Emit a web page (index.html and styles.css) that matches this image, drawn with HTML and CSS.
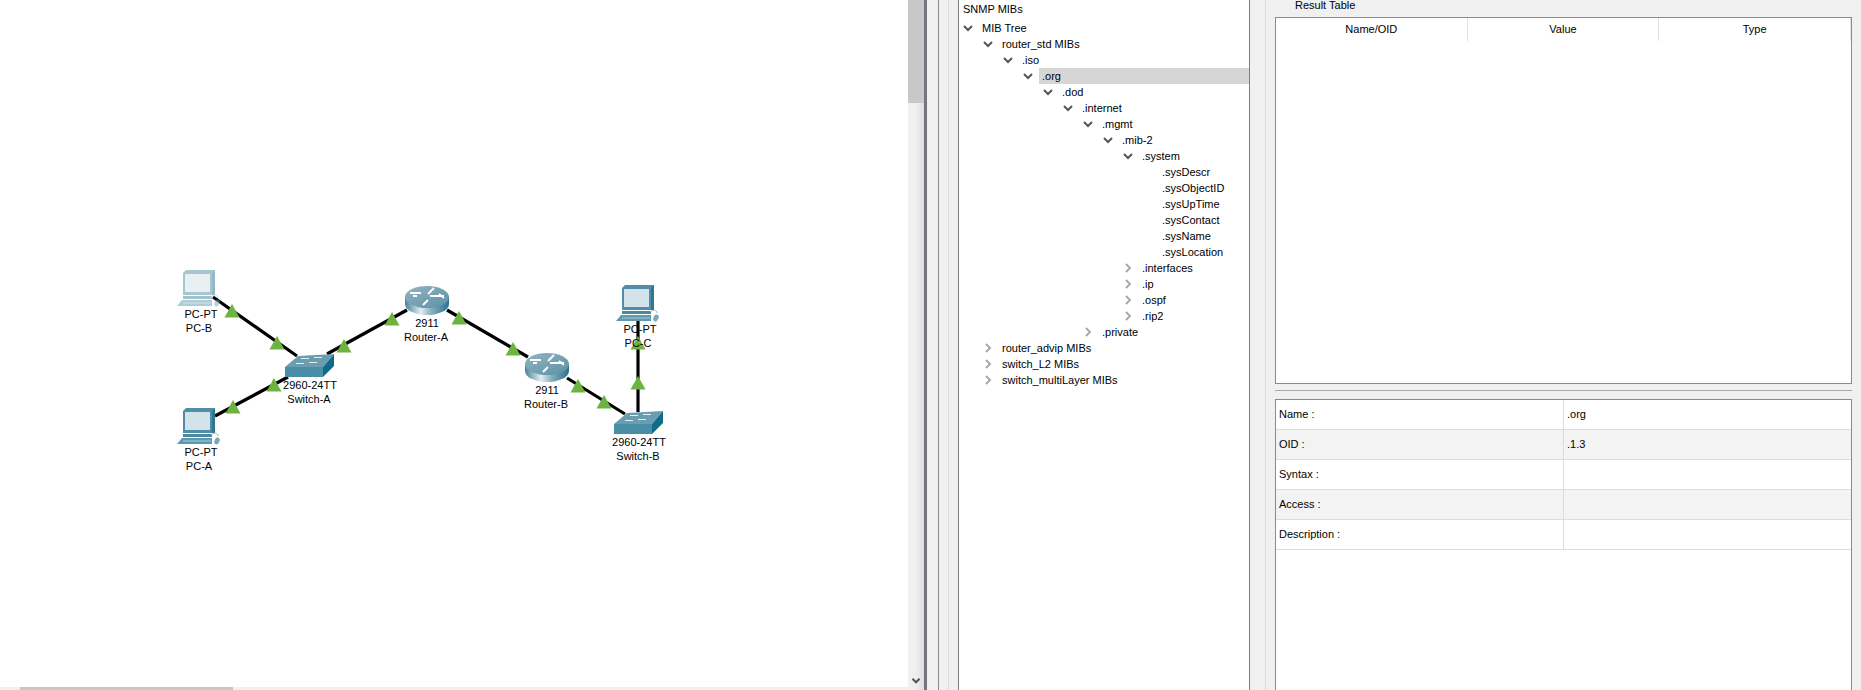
FILE: index.html
```html
<!DOCTYPE html>
<html lang="en">
<head>
<meta charset="utf-8">
<title>SNMP MIB Browser</title>
<link rel="stylesheet" href="styles.css">
</head>
<body>
<main class="app">
  <section class="workspace">
    <div class="canvas-row">
      <div class="canvas">
        <svg class="diagram" width="908" height="687" viewBox="0 0 908 687" xmlns="http://www.w3.org/2000/svg">
          <defs>
            <linearGradient id="routerBody" x1="0" x2="1" y1="0" y2="0">
              <stop offset="0" stop-color="#4a8298"/>
              <stop offset=".36" stop-color="#e2edf0"/>
              <stop offset=".6" stop-color="#86afbe"/>
              <stop offset="1" stop-color="#2a728c"/>
            </linearGradient>
            <linearGradient id="routerTop" x1="0" x2="1" y1="0" y2="1">
              <stop offset="0" stop-color="#93b5c3"/>
              <stop offset="1" stop-color="#5b90a5"/>
            </linearGradient>
            <g id="pc">
              <path class="pc-back" d="M0 3 3 0H32V25H0Z"/>
              <path class="pc-side" d="M29 3 32 0V25H29Z"/>
              <rect class="pc-screen" x="2" y="4" width="25" height="18"/>
              <rect class="pc-stand" x="0" y="26" width="29" height="3"/>
              <path class="pc-base" d="M-6 36-1 30H29V36Z"/>
              <path class="pc-line" d="M0 33H28"/>
              <path class="pc-cable" d="M28 27C31 24 35 25 35 28"/>
              <ellipse class="pc-mouse" cx="34" cy="33" rx="2.5" ry="3.5" transform="rotate(25 34 33)"/>
            </g>
            <g id="router">
              <path fill="url(#routerBody)" d="M-22 0V7A22 11 0 0 0 22 7V0Z"/>
              <ellipse fill="url(#routerTop)" rx="22" ry="11"/>
              <path class="router-arrows" d="M-17-4H-6M-14-1H-10M1-3 7-9M3-1H17M12-3 17 1M-4 8 1 3"/>
            </g>
            <g id="switch">
              <path class="sw-top" d="M0 13 13 2 49 0 38 13Z"/>
              <path class="sw-front" d="M0 13H38V23H0Z"/>
              <path class="sw-side" d="M38 13 49 0V12L38 23Z"/>
              <path class="sw-marks" d="M16 4.500H24M29 3.500H37M11 9.500H19M24 8.500H32"/>
            </g>
            <path id="tri" class="tri" d="M0 0 7.500 13.500H-7.500Z"/>
          </defs>

          <g class="links">
            <path d="M213 297 297 356"/>
            <path d="M215 416 288 377"/>
            <path d="M327 354 407 310"/>
            <path d="M447 310 528 357"/>
            <path d="M567 378 625 414"/>
            <path d="M638 318V412"/>
          </g>

          <use href="#pc" x="183" y="270" class="faded"/>
          <use href="#pc" x="183" y="408"/>
          <use href="#pc" x="622" y="285"/>
          <use href="#router" x="427" y="297"/>
          <use href="#router" x="547" y="364"/>
          <use href="#switch" x="285" y="354"/>
          <use href="#switch" x="614" y="411"/>

          <use href="#tri" x="232" y="304"/>
          <use href="#tri" x="277" y="336"/>
          <use href="#tri" x="344" y="339"/>
          <use href="#tri" x="392" y="312"/>
          <use href="#tri" x="274" y="378"/>
          <use href="#tri" x="233" y="400"/>
          <use href="#tri" x="459" y="311"/>
          <use href="#tri" x="513" y="342"/>
          <use href="#tri" x="578" y="379"/>
          <use href="#tri" x="604" y="395"/>
          <use href="#tri" x="638" y="376"/>
          <use href="#tri" x="638" y="336"/>

          <g class="labels">
            <text x="201" y="318">PC-PT</text>
            <text x="199" y="332">PC-B</text>
            <text x="201" y="456">PC-PT</text>
            <text x="199" y="470">PC-A</text>
            <text x="310" y="389">2960-24TT</text>
            <text x="309" y="403">Switch-A</text>
            <text x="427" y="327">2911</text>
            <text x="426" y="341">Router-A</text>
            <text x="547" y="394">2911</text>
            <text x="546" y="408">Router-B</text>
            <text x="640" y="333">PC-PT</text>
            <text x="638" y="347">PC-C</text>
            <text x="639" y="446">2960-24TT</text>
            <text x="638" y="460">Switch-B</text>
          </g>
        </svg>
      </div>
      <div class="vscroll">
        <div class="vthumb"></div>
        <svg class="vscroll-arrow" width="8" height="6" viewBox="0 0 8 6"><path d="M.5 .8 4 4.300 7.500 .8"/></svg>
      </div>
    </div>
    <div class="hscroll"><div class="hthumb"></div></div>
  </section>

  <section class="dock">
    <div class="frame-mid">
      <div class="frame-inner">
        <div class="tree">
          <div class="tree-title">SNMP MIBs</div>
          <div class="row d0"><svg class="chev" viewBox="0 0 12 16"><path class="open" d="M2 6 6 10 10 6"/></svg><span class="label">MIB Tree</span></div>
          <div class="row d1"><svg class="chev" viewBox="0 0 12 16"><path class="open" d="M2 6 6 10 10 6"/></svg><span class="label">router_std MIBs</span></div>
          <div class="row d2"><svg class="chev" viewBox="0 0 12 16"><path class="open" d="M2 6 6 10 10 6"/></svg><span class="label">.iso</span></div>
          <div class="row d3"><svg class="chev" viewBox="0 0 12 16"><path class="open" d="M2 6 6 10 10 6"/></svg><span class="label selected">.org</span></div>
          <div class="row d4"><svg class="chev" viewBox="0 0 12 16"><path class="open" d="M2 6 6 10 10 6"/></svg><span class="label">.dod</span></div>
          <div class="row d5"><svg class="chev" viewBox="0 0 12 16"><path class="open" d="M2 6 6 10 10 6"/></svg><span class="label">.internet</span></div>
          <div class="row d6"><svg class="chev" viewBox="0 0 12 16"><path class="open" d="M2 6 6 10 10 6"/></svg><span class="label">.mgmt</span></div>
          <div class="row d7"><svg class="chev" viewBox="0 0 12 16"><path class="open" d="M2 6 6 10 10 6"/></svg><span class="label">.mib-2</span></div>
          <div class="row d8"><svg class="chev" viewBox="0 0 12 16"><path class="open" d="M2 6 6 10 10 6"/></svg><span class="label">.system</span></div>
          <div class="row d9"><span class="chev"></span><span class="label">.sysDescr</span></div>
          <div class="row d9"><span class="chev"></span><span class="label">.sysObjectID</span></div>
          <div class="row d9"><span class="chev"></span><span class="label">.sysUpTime</span></div>
          <div class="row d9"><span class="chev"></span><span class="label">.sysContact</span></div>
          <div class="row d9"><span class="chev"></span><span class="label">.sysName</span></div>
          <div class="row d9"><span class="chev"></span><span class="label">.sysLocation</span></div>
          <div class="row d8"><svg class="chev" viewBox="0 0 12 16"><path class="closed" d="M4 4 8 8 4 12"/></svg><span class="label">.interfaces</span></div>
          <div class="row d8"><svg class="chev" viewBox="0 0 12 16"><path class="closed" d="M4 4 8 8 4 12"/></svg><span class="label">.ip</span></div>
          <div class="row d8"><svg class="chev" viewBox="0 0 12 16"><path class="closed" d="M4 4 8 8 4 12"/></svg><span class="label">.ospf</span></div>
          <div class="row d8"><svg class="chev" viewBox="0 0 12 16"><path class="closed" d="M4 4 8 8 4 12"/></svg><span class="label">.rip2</span></div>
          <div class="row d6"><svg class="chev" viewBox="0 0 12 16"><path class="closed" d="M4 4 8 8 4 12"/></svg><span class="label">.private</span></div>
          <div class="row d1"><svg class="chev" viewBox="0 0 12 16"><path class="closed" d="M4 4 8 8 4 12"/></svg><span class="label">router_advip MIBs</span></div>
          <div class="row d1"><svg class="chev" viewBox="0 0 12 16"><path class="closed" d="M4 4 8 8 4 12"/></svg><span class="label">switch_L2 MIBs</span></div>
          <div class="row d1"><svg class="chev" viewBox="0 0 12 16"><path class="closed" d="M4 4 8 8 4 12"/></svg><span class="label">switch_multiLayer MIBs</span></div>
        </div>
        <div class="results">
          <div class="results-title">Result Table</div>
          <div class="result-box">
            <div class="result-head">
              <div class="head-cell">Name/OID</div>
              <div class="head-cell">Value</div>
              <div class="head-cell">Type</div>
            </div>
          </div>
          <div class="separator"></div>
          <div class="details">
            <div class="detail-row"><div class="detail-cell">Name :</div><div class="detail-cell">.org</div></div>
            <div class="detail-row alt"><div class="detail-cell">OID :</div><div class="detail-cell">.1.3</div></div>
            <div class="detail-row"><div class="detail-cell">Syntax :</div><div class="detail-cell"></div></div>
            <div class="detail-row alt"><div class="detail-cell">Access :</div><div class="detail-cell"></div></div>
            <div class="detail-row"><div class="detail-cell">Description :</div><div class="detail-cell"></div></div>
          </div>
        </div>
      </div>
    </div>
  </section>
</main>
</body>
</html>
```

FILE: styles.css
```css
* { box-sizing: border-box; }

html, body {
  margin: 0;
  height: 690px;
  overflow: hidden;
  background: #f0f0f0;
}

body {
  font-family: "Liberation Sans", Arial, sans-serif;
  font-size: 11px;
  color: #000;
}

.app {
  display: flex;
  width: 1861px;
  height: 690px;
}

/* left: network canvas */
.workspace {
  display: flex;
  flex-direction: column;
  width: 924px;
  height: 690px;
}

.canvas-row {
  display: flex;
  height: 687px;
}

.canvas {
  width: 908px;
  height: 687px;
  background: #fff;
}

.diagram { display: block; }

.links path {
  fill: none;
  stroke: #000;
  stroke-width: 3.2;
}

.tri { fill: #6db33f; }

.labels text {
  font-family: "Liberation Sans", Arial, sans-serif;
  font-size: 11px;
  text-anchor: middle;
  fill: #000;
}

.faded { opacity: .5; }

.pc-back { fill: #4f8ea6; }
.pc-side { fill: #2f7690; }
.pc-screen { fill: #d3e3ea; }
.pc-stand { fill: #4a8aa1; }
.pc-base { fill: #5d9ab0; }
.pc-line { stroke: #a9cad6; stroke-width: 1; fill: none; }
.pc-cable { stroke: #9cb6c1; stroke-width: 1; fill: none; }
.pc-mouse { fill: #7fa6b6; }

.router-arrows {
  fill: none;
  stroke: #fff;
  stroke-width: 2;
}

.sw-top { fill: #6b9db1; }
.sw-front { fill: #4a8da6; }
.sw-side { fill: #0f6b88; }
.sw-marks { stroke: #e6f0f4; stroke-width: 1; fill: none; }

.vscroll {
  display: flex;
  flex-direction: column;
  justify-content: space-between;
  align-items: center;
  width: 16px;
  height: 690px;
  padding-bottom: 6px;
  background: linear-gradient(90deg, #f0f0f0 50%, #dcdcdc);
}

.vthumb {
  width: 100%;
  height: 103px;
  background: #c8c8c8;
}

.vscroll-arrow path {
  fill: none;
  stroke: #555;
  stroke-width: 2;
}

.hscroll {
  width: 908px;
  height: 3px;
  padding-left: 20px;
  background: #f0f0f0;
}

.hthumb {
  width: 213px;
  height: 3px;
  background: #c6c6c6;
}

/* right: nested docked frames */
.dock {
  width: 937px;
  height: 690px;
  padding-left: 11px;
  border-left: 3px solid #75757d;
}

.frame-mid {
  height: 100%;
  padding-left: 9px;
  border-left: 1px solid #8a8a94;
}

.frame-inner {
  display: flex;
  height: 100%;
  padding-left: 9px;
  border-left: 1px solid #dcdcdc;
}

/* MIB tree */
.tree {
  flex: none;
  width: 292px;
  height: 100%;
  background: #fff;
  border-left: 1px solid #7d7d85;
  border-right: 1px solid #7d7d85;
}

.tree-title {
  height: 20px;
  padding: 3px 0 0 4px;
  line-height: 13px;
}

.row {
  display: flex;
  align-items: center;
  height: 16px;
  line-height: 16px;
  white-space: nowrap;
}

.d0 { padding-left: 3px; }
.d1 { padding-left: 23px; }
.d2 { padding-left: 43px; }
.d3 { padding-left: 63px; }
.d4 { padding-left: 83px; }
.d5 { padding-left: 103px; }
.d6 { padding-left: 123px; }
.d7 { padding-left: 143px; }
.d8 { padding-left: 163px; }
.d9 { padding-left: 183px; }

.chev {
  flex: none;
  display: block;
  width: 12px;
  height: 16px;
  margin-right: 5px;
}

.chev .open {
  fill: none;
  stroke: #555;
  stroke-width: 2;
}

.chev .closed {
  fill: none;
  stroke: #aaa;
  stroke-width: 2;
}

.label {
  flex: 1;
  height: 16px;
  padding-left: 3px;
}

.selected { background: #d6d6d6; }

/* result table + details */
.results {
  display: flex;
  flex: 1;
  flex-direction: column;
  height: 100%;
  margin-left: 15px;
  padding: 0 9px;
  border-left: 1px solid #dcdcdc;
}

.results-title {
  height: 17px;
  padding-left: 20px;
  line-height: 11px;
}

.result-box {
  height: 367px;
  background: #fff;
  border: 1px solid #8a8a94;
}

.result-head {
  display: grid;
  grid-template-columns: repeat(3, 1fr);
  height: 23px;
}

.head-cell {
  text-align: center;
  line-height: 22px;
  border-right: 1px solid #e2e2e2;
}

.separator {
  margin: 6px 0 8px;
  border-top: 1px solid #a8a8a8;
}

.details {
  flex: 1;
  background: #fff;
  border: 1px solid #8a8a94;
  border-bottom: 0;
}

.detail-row {
  display: grid;
  grid-template-columns: 288px 1fr;
  height: 30px;
  border-bottom: 1px solid #dcdcdc;
}

.alt { background: #f3f3f3; }

.detail-cell {
  padding-left: 3px;
  line-height: 28px;
}

.detail-cell:first-child { border-right: 1px solid #dcdcdc; }
```
